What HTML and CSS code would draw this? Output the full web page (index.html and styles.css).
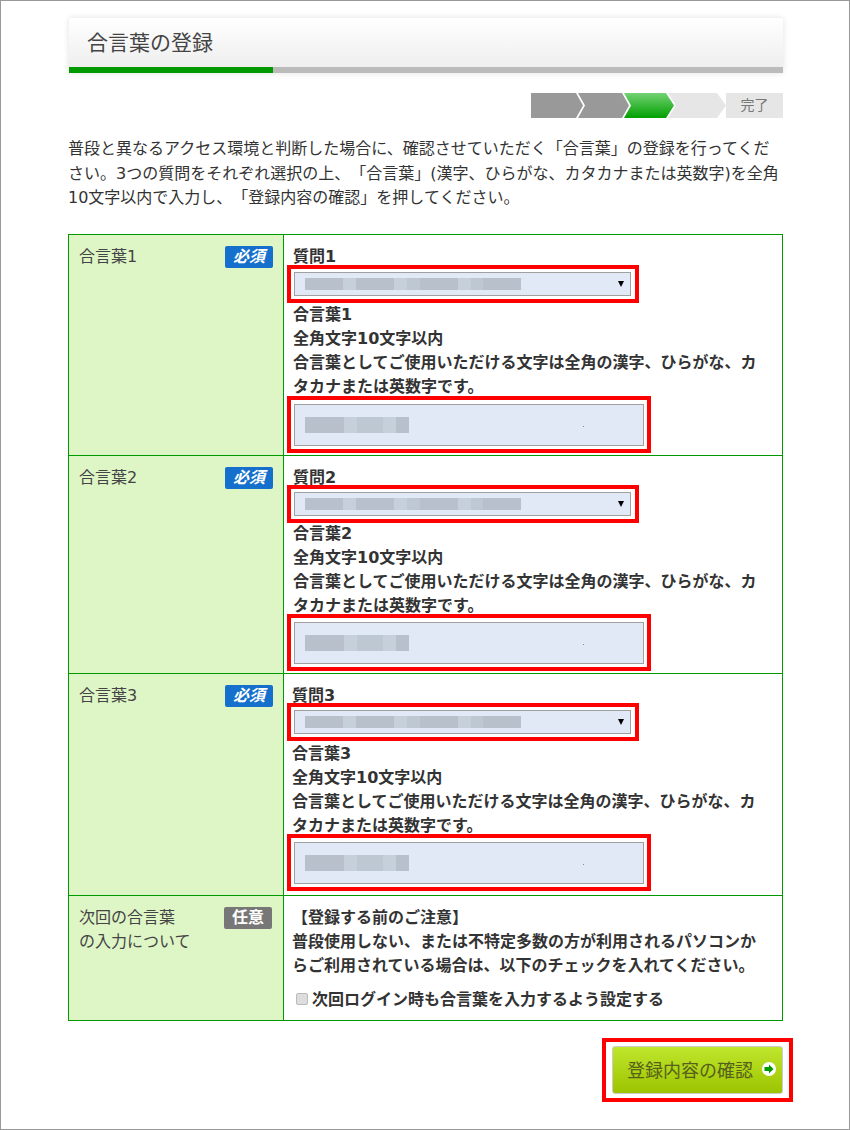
FILE: index.html
```html
<!DOCTYPE html>
<html lang="ja">
  <head>
    <meta charset="UTF-8">
    <meta name="viewport" content="width=device-width, initial-scale=1.0">
    <title>合言葉の登録</title>
    <link rel="stylesheet" href="styles.css">
  </head>
  <body>
    <main class="page">
        <header class="title-card">
            <h1>合言葉の登録</h1>
            <div class="title-bar"><div class="title-bar-fill"></div></div>
        </header>

        <div class="steps">
            <svg class="steps-arrows" width="195" height="25" viewBox="0 0 195 25">
                <defs>
                    <linearGradient id="stepGreen" x1="0" y1="0" x2="0" y2="1">
                        <stop offset="0" stop-color="#74d274"/>
                        <stop offset="1" stop-color="#00a000"/>
                    </linearGradient>
                </defs>
                <polygon points="0,0 45,0 52,12.5 45,25 0,25" fill="#999999"/>
                <polygon points="47,0 91,0 98,12.5 91,25 47,25 54,12.5" fill="#999999"/>
                <polygon points="93,0 135,0 143,12.5 135,25 93,25 100,12.5" fill="url(#stepGreen)"/>
                <polygon points="137,0 186,0 195,12.5 186,25 137,25 145,12.5" fill="#e6e6e6"/>
            </svg>
            <div class="steps-done">完了</div>
        </div>

        <p class="intro">普段と異なるアクセス環境と判断した場合に、確認させていただく「合言葉」の登録を行ってくだ<br>さい。3つの質問をそれぞれ選択の上、「合言葉」(漢字、ひらがな、カタカナまたは英数字)を全角<br>10文字以内で入力し、「登録内容の確認」を押してください。</p>

        <div class="form-table">
            <div class="row row1">
                <div class="label">
                    <span>合言葉1</span>
                    <span class="badge badge-required">必須</span>
                </div>
                <div class="field">
                    <div class="question">質問1</div>
                    <div class="mark mark-select">
                        <div class="fake-select"><span class="blur-select"></span><span class="select-arrow"></span></div>
                    </div>
                    <div class="note">
                        合言葉1<br>
                        全角文字10文字以内<br>
                        合言葉としてご使用いただける文字は全角の漢字、ひらがな、カタカナまたは英数字です。
                    </div>
                    <div class="mark mark-input">
                        <div class="fake-input"><span class="blur-input"></span></div>
                    </div>
                </div>
            </div>
            <div class="row row2">
                <div class="label">
                    <span>合言葉2</span>
                    <span class="badge badge-required">必須</span>
                </div>
                <div class="field">
                    <div class="question">質問2</div>
                    <div class="mark mark-select">
                        <div class="fake-select"><span class="blur-select"></span><span class="select-arrow"></span></div>
                    </div>
                    <div class="note">
                        合言葉2<br>
                        全角文字10文字以内<br>
                        合言葉としてご使用いただける文字は全角の漢字、ひらがな、カタカナまたは英数字です。
                    </div>
                    <div class="mark mark-input">
                        <div class="fake-input"><span class="blur-input"></span></div>
                    </div>
                </div>
            </div>
            <div class="row row3">
                <div class="label">
                    <span>合言葉3</span>
                    <span class="badge badge-required">必須</span>
                </div>
                <div class="field">
                    <div class="question">質問3</div>
                    <div class="mark mark-select">
                        <div class="fake-select"><span class="blur-select"></span><span class="select-arrow"></span></div>
                    </div>
                    <div class="note">
                        合言葉3<br>
                        全角文字10文字以内<br>
                        合言葉としてご使用いただける文字は全角の漢字、ひらがな、カタカナまたは英数字です。
                    </div>
                    <div class="mark mark-input">
                        <div class="fake-input"><span class="blur-input"></span></div>
                    </div>
                </div>
            </div>
            <div class="row row4">
                <div class="label">
                    <span>次回の合言葉<br>の入力について</span>
                    <span class="badge badge-optional">任意</span>
                </div>
                <div class="field">
                    <div class="note">
                        【登録する前のご注意】<br>
                        普段使用しない、または不特定多数の方が利用されるパソコンからご利用されている場合は、以下のチェックを入れてください。
                    </div>
                    <label class="check-line"><input type="checkbox" class="check">次回ログイン時も合言葉を入力するよう設定する</label>
                </div>
            </div>
        </div>

        <div class="actions">
            <div class="mark-button">
                <button type="button" class="submit-button">
                    登録内容の確認
                    <svg width="14" height="14" viewBox="0 0 14 14">
                        <circle cx="7" cy="7" r="7" fill="#ffffff"/>
                        <polygon points="2.5,5 7,5 7,2.5 11.5,7 7,11.5 7,9 2.5,9" fill="#009900"/>
                    </svg>
                </button>
            </div>
        </div>
    </main>
  </body>
</html>
```

FILE: styles.css
```css
html, body {
    margin: 0;
    padding: 0;
}
body {
    box-sizing: border-box;
    width: 850px;
    height: 1130px;
    overflow: hidden;
    border: 1px solid #999999;
    background-color: #ffffff;
    color: #333333;
    font-family: "DejaVu Sans", "Noto Sans CJK JP", sans-serif;
    font-size: 16px;
    text-spacing-trim: space-all;
}
.page {
    width: 715px;
    margin-left: 67px;
    padding-top: 17px;
}

/* title */
.title-card {
    margin-left: 1px;
    border-radius: 3px 3px 0 0;
    background: linear-gradient(#ffffff, #ececec);
    box-shadow: 0 0 6px rgba(0, 0, 0, 0.12);
}
.title-card h1 {
    margin: 0;
    height: 49px;
    padding-left: 18px;
    color: #444444;
    font-size: 21px;
    font-weight: normal;
    line-height: 51px;
}
.title-bar {
    height: 6px;
    background-color: #bbbbbb;
}
.title-bar-fill {
    width: 204px;
    height: 6px;
    background-color: #009900;
}

/* steps */
.steps {
    display: flex;
    justify-content: flex-end;
    margin-top: 20px;
}
.steps-arrows {
    display: block;
}
.steps-done {
    width: 57px;
    height: 25px;
    background-color: #e6e6e6;
    color: #777777;
    font-size: 14px;
    line-height: 25px;
    text-align: center;
}

.intro {
    margin: 19px 0 0;
    font-size: 16px;
    line-height: 24.5px;
}

/* table */
.form-table {
    margin-top: 23px;
    border: 1px solid #009900;
}
.row {
    display: flex;
    border-bottom: 1px solid #009900;
}
.row:last-child {
    border-bottom: none;
}
.label {
    display: flex;
    flex: none;
    justify-content: space-between;
    align-items: flex-start;
    box-sizing: border-box;
    width: 215px;
    padding: 10px 10px 0;
    border-right: 1px solid #009900;
    background-color: #def5c6;
    color: #444444;
    line-height: 24px;
}
.badge {
    width: 48px;
    height: 22px;
    margin-top: 1px;
    border-radius: 2px;
    color: #ffffff;
    font-size: 16px;
    font-weight: bold;
    line-height: 22px;
    text-align: center;
}
.badge-required {
    background-color: #1470cc;
    font-style: italic;
}
.badge-optional {
    margin-right: 1px;
    background-color: #777777;
}
.field {
    flex: 1;
    padding: 10px 19px 0 9px;
    font-weight: bold;
    line-height: 24px;
}
.question {
    height: 24px;
}
.mark {
    box-sizing: border-box;
    margin-left: -6px;
    border: 4px solid #ff0000;
}
.mark-select {
    width: 352px;
    padding: 3px 4px 3px 3px;
}
.mark-input {
    width: 364px;
    padding: 4px 3px 3px;
}
.fake-select {
    display: flex;
    justify-content: space-between;
    align-items: center;
    box-sizing: border-box;
    height: 24px;
    padding: 0 6px 0 10px;
    border: 1px solid #a0a0a0;
    background-color: #e0e9f5;
}
.fake-input {
    display: flex;
    align-items: center;
    box-sizing: border-box;
    height: 42px;
    padding-left: 10px;
    border: 1px solid #a0a0a0;
    background: linear-gradient(#888888, #888888) 288px 21px / 1px 1px no-repeat #e0e9f5;
}
.blur-select {
    width: 216px;
    height: 12px;
    background: linear-gradient(to right,
        #b7c0cb 0 38px, #c6d0da 38px 51px, #b7c0cb 51px 89px, #c6d0da 89px 102px,
        #bec8d3 102px 115px, #b7c0cb 115px 153px, #c6d0da 153px 166px,
        #bec8d3 166px 178px, #b7c0cb 178px 216px);
}
.blur-input {
    width: 104px;
    height: 16px;
    background: linear-gradient(to right,
        #b7c0cb 0 39px, #c6d0da 39px 52px, #bec8d3 52px 78px,
        #c6d0da 78px 91px, #b7c0cb 91px 104px);
}
.select-arrow {
    width: 0;
    height: 0;
    border-top: 6px solid #000000;
    border-left: 3px solid transparent;
    border-right: 3px solid transparent;
}

/* small per-row differences */
.row1 .mark-select { margin-top: -4px; }
.row1 .mark-input { margin-top: -3px; }
.row1 .field { padding-bottom: 2px; }

.row2 .mark-select { margin-top: -5px; }
.row2 .note { margin-top: -1px; }
.row2 .mark-input { margin-top: -4px; }
.row2 .field { padding-bottom: 2px; }

.row3 .field { padding-left: 8px; padding-bottom: 4px; }
.row3 .mark { margin-left: -5px; }
.row3 .mark-select { margin-top: -5px; }
.row3 .note { margin-top: 1px; }
.row3 .mark-input { margin-top: -4px; }

.row4 .field { padding-left: 8px; padding-bottom: 8px; }

.check-line {
    display: flex;
    align-items: center;
    margin-top: 10px;
}
.check {
    appearance: none;
    box-sizing: border-box;
    width: 12px;
    height: 12px;
    margin: 0 4px 2px 4px;
    border: 1px solid #bbbbbb;
    border-radius: 2px;
    background-color: #dddddd;
}

/* button */
.actions {
    display: flex;
    justify-content: flex-end;
    margin-top: 17px;
    margin-right: -10px;
}
.mark-button {
    padding: 4px 6px;
    border: 4px solid #ff0000;
}
.submit-button {
    display: flex;
    align-items: center;
    box-sizing: border-box;
    width: 171px;
    height: 48px;
    padding: 0 6px 2px 14px;
    justify-content: space-between;
    border: 1px solid #cccccc;
    border-radius: 3px;
    background: linear-gradient(#c0e62d, #9dc400);
    color: #55601c;
    font-family: inherit;
    font-size: 18px;
}
```
